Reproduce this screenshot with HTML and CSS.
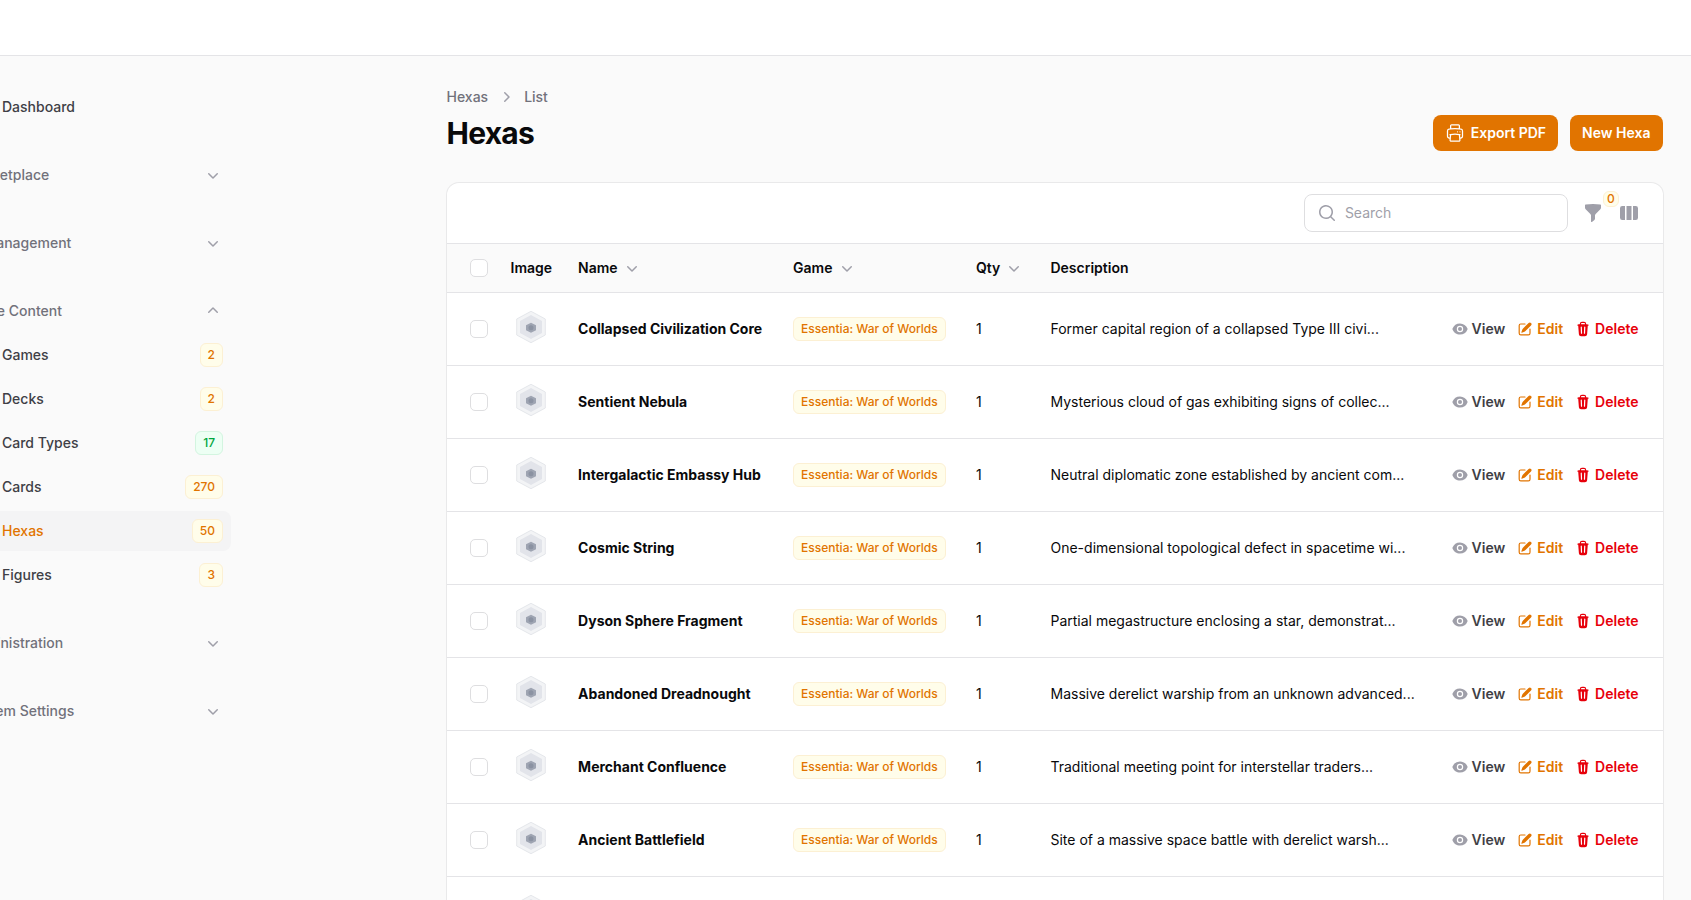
FILE: index.html
```html
<!DOCTYPE html>
<html lang="en">

<head>
    <meta charset="UTF-8">
    <meta name="viewport" content="width=device-width, initial-scale=1.0">
    <title>Hexas</title>
    <link rel="stylesheet" href="styles.css">
</head>

<body>

    <!-- Shared icons -->
    <svg class="sprite" aria-hidden="true">
        <symbol id="chevron-down" viewBox="0 0 20 20">
            <path fill-rule="evenodd" clip-rule="evenodd" d="M5.22 8.22a.75.75 0 0 1 1.06 0L10 11.94l3.72-3.72a.75.75 0 1 1 1.06 1.06l-4.25 4.25a.75.75 0 0 1-1.06 0L5.22 9.28a.75.75 0 0 1 0-1.06Z" />
        </symbol>
        <symbol id="chevron-up" viewBox="0 0 20 20">
            <path fill-rule="evenodd" clip-rule="evenodd" d="M14.78 11.78a.75.75 0 0 1-1.06 0L10 8.06l-3.72 3.72a.75.75 0 1 1-1.06-1.06l4.25-4.25a.75.75 0 0 1 1.06 0l4.25 4.25a.75.75 0 0 1 0 1.06Z" />
        </symbol>
        <symbol id="chevron-right" viewBox="0 0 20 20">
            <path fill-rule="evenodd" clip-rule="evenodd" d="M8.22 5.22a.75.75 0 0 1 1.06 0l4.25 4.25a.75.75 0 0 1 0 1.06l-4.25 4.25a.75.75 0 0 1-1.06-1.06L11.94 10 8.22 6.28a.75.75 0 0 1 0-1.06Z" />
        </symbol>
        <symbol id="printer" viewBox="0 0 24 24">
            <path fill="none" stroke="currentColor" stroke-width="1.5" stroke-linecap="round" stroke-linejoin="round" d="M6.72 13.829c-.24.03-.48.062-.72.096m.72-.096a42.415 42.415 0 0 1 10.56 0m-10.56 0L6.34 18m10.94-4.171c.24.03.48.062.72.096m-.72-.096L17.66 18m0 0 .229 2.523a1.125 1.125 0 0 1-1.12 1.227H7.231c-.662 0-1.18-.568-1.12-1.227L6.34 18m11.318 0h1.091A2.25 2.25 0 0 0 21 15.75V9.456c0-1.081-.768-2.015-1.837-2.175a48.055 48.055 0 0 0-1.913-.247M6.34 18H5.25A2.25 2.25 0 0 1 3 15.75V9.456c0-1.081.768-2.015 1.837-2.175a48.041 48.041 0 0 1 1.913-.247m10.5 0a48.536 48.536 0 0 0-10.5 0m10.5 0V3.375c0-.621-.504-1.125-1.125-1.125h-8.25c-.621 0-1.125.504-1.125 1.125v3.659M18 10.5h.008v.008H18V10.5Zm-3 0h.008v.008H15V10.5Z" />
        </symbol>
        <symbol id="search" viewBox="0 0 20 20">
            <path fill-rule="evenodd" clip-rule="evenodd" d="M9 3.5a5.5 5.5 0 1 0 0 11 5.5 5.5 0 0 0 0-11ZM2 9a7 7 0 1 1 12.452 4.391l3.328 3.329a.75.75 0 1 1-1.06 1.06l-3.329-3.328A7 7 0 0 1 2 9Z" />
        </symbol>
        <symbol id="funnel" viewBox="0 0 20 20">
            <path fill-rule="evenodd" clip-rule="evenodd" d="M2.628 1.601C5.028 1.206 7.49 1 10 1s4.973.206 7.372.601a.75.75 0 0 1 .628.74v2.288a2.25 2.25 0 0 1-.659 1.59l-4.682 4.683a2.25 2.25 0 0 0-.659 1.59v3.037c0 .684-.31 1.33-.844 1.757l-1.937 1.55A.75.75 0 0 1 8 18.25v-5.757a2.25 2.25 0 0 0-.659-1.591L2.659 6.22A2.25 2.25 0 0 1 2 4.629V2.34a.75.75 0 0 1 .628-.74Z" />
        </symbol>
        <symbol id="columns" viewBox="0 0 20 20">
            <path d="M14 17h2.75A2.25 2.25 0 0 0 19 14.75v-9.5A2.25 2.25 0 0 0 16.75 3H14v14ZM12.5 3h-5v14h5V3ZM3.25 3H6v14H3.25A2.25 2.25 0 0 1 1 14.75v-9.5A2.25 2.25 0 0 1 3.25 3Z" />
        </symbol>
        <symbol id="eye" viewBox="0 0 20 20">
            <path d="M10 12.5a2.5 2.5 0 1 0 0-5 2.5 2.5 0 0 0 0 5Z" />
            <path fill-rule="evenodd" clip-rule="evenodd" d="M.664 10.59a1.651 1.651 0 0 1 0-1.186A10.004 10.004 0 0 1 10 3c4.257 0 7.893 2.66 9.336 6.41.147.381.146.804 0 1.186A10.004 10.004 0 0 1 10 17c-4.257 0-7.893-2.66-9.336-6.41ZM14 10a4 4 0 1 1-8 0 4 4 0 0 1 8 0Z" />
        </symbol>
        <symbol id="pencil" viewBox="0 0 20 20">
            <path d="m5.433 13.917 1.262-3.155A4 4 0 0 1 7.58 9.42l6.92-6.918a2.121 2.121 0 0 1 3 3l-6.92 6.918c-.383.383-.84.685-1.343.886l-3.154 1.262a.5.5 0 0 1-.65-.65Z" />
            <path d="M3.5 5.75c0-.69.56-1.25 1.25-1.25H10A.75.75 0 0 0 10 3H4.75A2.75 2.75 0 0 0 2 5.75v9.5A2.75 2.75 0 0 0 4.75 18h9.5A2.75 2.75 0 0 0 17 15.25V10a.75.75 0 0 0-1.5 0v5.25c0 .69-.56 1.25-1.25 1.25h-9.5c-.69 0-1.25-.56-1.25-1.25v-9.5Z" />
        </symbol>
        <symbol id="trash" viewBox="0 0 20 20">
            <path fill-rule="evenodd" clip-rule="evenodd" d="M8.75 1A2.75 2.75 0 0 0 6 3.75v.443c-.795.077-1.584.176-2.365.298a.75.75 0 1 0 .23 1.482l.149-.022.841 10.518A2.75 2.75 0 0 0 7.596 19h4.807a2.75 2.75 0 0 0 2.742-2.53l.841-10.52.149.023a.75.75 0 0 0 .23-1.482A41.03 41.03 0 0 0 14 4.193V3.75A2.75 2.75 0 0 0 11.25 1h-2.5ZM10 4c.84 0 1.673.025 2.5.075V3.75c0-.69-.56-1.25-1.25-1.25h-2.5c-.69 0-1.25.56-1.25 1.25v.325C8.327 4.025 9.16 4 10 4ZM8.58 7.72a.75.75 0 0 0-1.5.06l.3 7.5a.75.75 0 1 0 1.5-.06l-.3-7.5Zm4.34.06a.75.75 0 1 0-1.5-.06l-.3 7.5a.75.75 0 1 0 1.5.06l.3-7.5Z" />
        </symbol>
        <symbol id="hexa" viewBox="0 0 32 34">
            <path fill="#f3f4f6" stroke="#e5e7eb" d="M16 1.300 30.300 9v16L16 32.700 1.700 25V9Z" />
            <path fill="#e2e4ea" d="M16 5 27 11v12L16 29 5 23V11Z" />
            <path fill="#9ea4b2" d="M16 12.700 21 15.200v5L16 22.800l-5-2.600v-5Z" />
            <circle cx="16" cy="17.700" r="2.500" fill="#8b92a2" />
        </symbol>
    </svg>

    <header class="topbar"></header>

    <div class="layout">
        <nav class="sidebar">
            <a class="nav-item"><span class="nav-icon"></span><span class="nav-label">Dashboard</span></a>

            <div class="nav-group">
                <div class="group-head">Marketplace<svg class="icon"><use href="#chevron-down" /></svg></div>
            </div>
            <div class="nav-group">
                <div class="group-head">AI Management<svg class="icon"><use href="#chevron-down" /></svg></div>
            </div>
            <div class="nav-group">
                <div class="group-head">Game Content<svg class="icon"><use href="#chevron-up" /></svg></div>
                <a class="nav-item"><span class="nav-icon"></span><span class="nav-label">Games</span><span class="badge">2</span></a>
                <a class="nav-item"><span class="nav-icon"></span><span class="nav-label">Decks</span><span class="badge">2</span></a>
                <a class="nav-item"><span class="nav-icon"></span><span class="nav-label">Card Types</span><span class="badge badge-green">17</span></a>
                <a class="nav-item"><span class="nav-icon"></span><span class="nav-label">Cards</span><span class="badge">270</span></a>
                <a class="nav-item active"><span class="nav-icon"></span><span class="nav-label">Hexas</span><span class="badge">50</span></a>
                <a class="nav-item"><span class="nav-icon"></span><span class="nav-label">Figures</span><span class="badge">3</span></a>
            </div>
            <div class="nav-group">
                <div class="group-head">Administration<svg class="icon"><use href="#chevron-down" /></svg></div>
            </div>
            <div class="nav-group">
                <div class="group-head">System Settings<svg class="icon"><use href="#chevron-down" /></svg></div>
            </div>
        </nav>

        <main class="main">
            <div class="page-header">
                <div>
                    <div class="breadcrumbs">
                        <span>Hexas</span>
                        <svg class="icon"><use href="#chevron-right" /></svg>
                        <span>List</span>
                    </div>
                    <h1>Hexas</h1>
                </div>
                <div class="header-actions">
                    <button class="btn"><svg class="icon"><use href="#printer" /></svg>Export PDF</button>
                    <button class="btn">New Hexa</button>
                </div>
            </div>

            <div class="card">
                <div class="toolbar">
                    <label class="search">
                        <svg class="icon"><use href="#search" /></svg>
                        <input type="text" placeholder="Search">
                    </label>
                    <div class="filter">
                        <svg class="icon"><use href="#funnel" /></svg>
                        <span class="badge filter-count">0</span>
                    </div>
                    <svg class="icon"><use href="#columns" /></svg>
                </div>

                <table>
                    <thead>
                        <tr>
                            <th class="col-check"><span class="checkbox"></span></th>
                            <th class="col-image">Image</th>
                            <th class="col-name"><span class="sort">Name<svg class="icon"><use href="#chevron-down" /></svg></span></th>
                            <th class="col-game"><span class="sort">Game<svg class="icon"><use href="#chevron-down" /></svg></span></th>
                            <th class="col-qty"><span class="sort">Qty<svg class="icon"><use href="#chevron-down" /></svg></span></th>
                            <th class="col-desc">Description</th>
                            <th></th>
                        </tr>
                    </thead>
                    <tbody id="rows"></tbody>
                </table>
            </div>
        </main>
    </div>

    <script>
        const hexas = [
            ['Collapsed Civilization Core', 'Former capital region of a collapsed Type III civi...'],
            ['Sentient Nebula', 'Mysterious cloud of gas exhibiting signs of collec...'],
            ['Intergalactic Embassy Hub', 'Neutral diplomatic zone established by ancient com...'],
            ['Cosmic String', 'One-dimensional topological defect in spacetime wi...'],
            ['Dyson Sphere Fragment', 'Partial megastructure enclosing a star, demonstrat...'],
            ['Abandoned Dreadnought', 'Massive derelict warship from an unknown advanced...'],
            ['Merchant Confluence', 'Traditional meeting point for interstellar traders...'],
            ['Ancient Battlefield', 'Site of a massive space battle with derelict warsh...'],
            ['', '']
        ];

        // Build one table row per hexa
        document.getElementById('rows').innerHTML = hexas.map(function ([name, description]) {
            return `<tr>
                <td class="col-check"><span class="checkbox"></span></td>
                <td class="col-image"><svg class="thumb"><use href="#hexa" /></svg></td>
                <td class="name">${name}</td>
                <td><span class="badge">Essentia: War of Worlds</span></td>
                <td>1</td>
                <td>${description}</td>
                <td>
                    <div class="actions">
                        <a class="view"><svg class="icon-sm"><use href="#eye" /></svg>View</a>
                        <a class="edit"><svg class="icon-sm"><use href="#pencil" /></svg>Edit</a>
                        <a class="delete"><svg class="icon-sm"><use href="#trash" /></svg>Delete</a>
                    </div>
                </td>
            </tr>`;
        }).join('');
    </script>

</body>

</html>
```
FILE: styles.css
```css
* {
    box-sizing: border-box;
}

body {
    margin: 0;
    height: 100vh;
    overflow: hidden;
    background-color: #fafafa;
    color: #09090b;
    font-family: Inter, sans-serif;
    font-size: 14px;
    line-height: 20px;
}

.sprite {
    display: none;
}

.icon {
    display: block;
    flex-shrink: 0;
    width: 20px;
    height: 20px;
    color: #9f9fa9;
    fill: currentColor;
}

.icon-sm {
    width: 16px;
    height: 16px;
    fill: currentColor;
}

.topbar {
    height: 56px;
    background-color: white;
    border-bottom: 1px solid #e4e4e7;
}

.layout {
    display: flex;
    align-items: flex-start;
}

/* The sidebar starts left of the window, only its right part shows */
.sidebar {
    display: flex;
    flex-direction: column;
    gap: 28px;
    flex-shrink: 0;
    width: 273px;
    margin-left: -42px;
    padding-top: 31px;
}

.nav-group {
    display: flex;
    flex-direction: column;
    gap: 4px;
}

.nav-item,
.group-head {
    display: flex;
    align-items: center;
    height: 40px;
    padding: 0 8px;
    border-radius: 8px;
    font-weight: 500;
    color: #3f3f46;
}

.group-head {
    justify-content: space-between;
    color: #71717b;
}

.nav-icon {
    width: 24px;
    margin-right: 12px;
}

.nav-label {
    flex: 1;
}

.active {
    background-color: #f4f4f5;
    color: #e17400;
}

.badge {
    display: inline-block;
    padding: 3px 7px;
    border: 1px solid #fcf0d3;
    border-radius: 6px;
    background-color: #fffdea;
    color: #e17400;
    font-size: 12px;
    line-height: 16px;
    font-weight: 500;
}

.badge-green {
    border-color: #d3f5e0;
    background-color: #edfff4;
    color: #00a63e;
}

.main {
    flex-shrink: 0;
    width: 1216.4px;
    margin-left: 215.5px;
    padding-top: 31px;
}

.page-header {
    display: flex;
    justify-content: space-between;
    align-items: flex-end;
    height: 64px;
}

.breadcrumbs {
    display: flex;
    gap: 8px;
    color: #71717b;
    font-weight: 500;
}

h1 {
    margin: 8px 0 0;
    font-size: 30px;
    line-height: 36px;
    font-weight: 700;
    letter-spacing: -0.025em;
}

.header-actions {
    display: flex;
    gap: 12px;
    margin-right: 0.4px;
}

.btn {
    display: flex;
    align-items: center;
    gap: 6px;
    height: 36px;
    padding: 0 12px;
    border: none;
    border-radius: 8px;
    background-color: #e17400;
    color: white;
    font: 600 14px/20px Inter, sans-serif;
}

.btn .icon {
    color: white;
}

.card {
    margin-top: 32px;
    border-radius: 12px;
    background-color: white;
    box-shadow: 0 0 0 1px #e9e9ea;
    overflow: hidden;
}

.toolbar {
    display: flex;
    justify-content: flex-end;
    align-items: center;
    gap: 16px;
    height: 60px;
    padding-right: 24px;
}

.search {
    display: flex;
    align-items: center;
    gap: 8px;
    width: 264px;
    height: 38px;
    margin-right: -1px;
    padding: 0 12px;
    border: 1px solid #dedee0;
    border-radius: 8px;
}

.search input {
    width: 200px;
    padding: 0;
    border: none;
    outline: none;
    font: 14px/20px Inter, sans-serif;
}

.search input::placeholder {
    color: #9f9fa9;
}

.filter {
    position: relative;
}

.filter-count {
    position: absolute;
    left: 20px;
    top: -12px;
    width: 16px;
    height: 16px;
    padding: 0;
    line-height: 14px;
    text-align: center;
}

table {
    width: 100%;
    table-layout: fixed;
    border-collapse: separate;
    border-spacing: 0;
}

th {
    height: 50px;
    padding: 0 12px;
    border-top: 1px solid #e4e4e7;
    border-bottom: 1px solid #e4e4e7;
    background-color: #fafafa;
    font-weight: 600;
    text-align: left;
}

td {
    height: 73px;
    padding: 0 12px;
    border-bottom: 1px solid #e4e4e7;
    white-space: nowrap;
}

.col-check {
    width: 52px;
    padding: 0 0 0 23px;
}

.col-image {
    width: 67.6px;
}

.col-name {
    width: 215px;
}

.col-game {
    width: 182.8px;
}

.col-qty {
    width: 74.6px;
}

.col-desc {
    width: 390px;
}

.sort {
    display: flex;
    align-items: center;
    gap: 4px;
}

.checkbox {
    display: block;
    width: 18px;
    height: 18px;
    border: 1px solid #dedee0;
    border-radius: 5px;
    background-color: white;
}

.thumb {
    display: block;
    width: 32px;
    height: 34px;
    margin: -4px 0 0 4px;
}

.name {
    font-weight: 700;
}

.actions {
    display: flex;
    justify-content: flex-end;
    gap: 12px;
    padding-right: 12.4px;
    font-weight: 600;
}

.actions a {
    display: flex;
    align-items: center;
    gap: 4px;
}

.view {
    color: #3f3f46;
}

.view .icon-sm {
    color: #9f9fa9;
}

.edit {
    color: #e17400;
}

.delete {
    color: #e7000b;
}
```
